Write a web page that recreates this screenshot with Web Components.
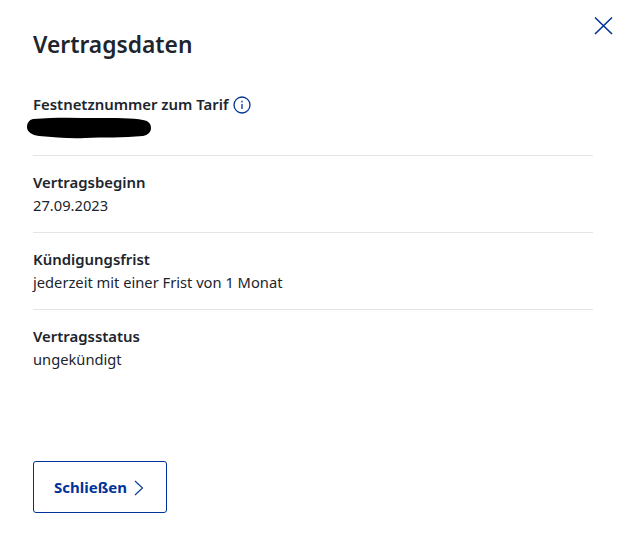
<!DOCTYPE html>
<html lang="de">
<head>
<meta charset="utf-8">
<title>Vertragsdaten</title>
<style>
  html, body { margin: 0; background: #fff; }
  body { font-family: "Noto Sans", "Open Sans", sans-serif; color: #20252d; }
</style>
</head>
<body>
<contract-dialog heading="Vertragsdaten">
  <data-row>
    <span slot="label">Festnetznummer zum Tarif</span>
    <info-icon slot="label"></info-icon>
    <svg slot="value" width="126" height="23" viewBox="0 0 126 23" style="display:block;margin-left:-6px">
      <path d="M6 3C30 1 50 2 70 2c18 0 36 0 46 2 6 1 8 4 8 8 0 4-3 7-8 8-20 2-40 1-58 2-16 1-30-1-46-2C5 19 0 16 0 11 0 7 2 4 6 3z" fill="#000"/>
    </svg>
  </data-row>
  <data-row>
    <span slot="label">Vertragsbeginn</span>
    <span slot="value">27.09.2023</span>
  </data-row>
  <data-row>
    <span slot="label">Kündigungsfrist</span>
    <span slot="value">jederzeit mit einer Frist von 1 Monat</span>
  </data-row>
  <data-row last>
    <span slot="label">Vertragsstatus</span>
    <span slot="value">ungekündigt</span>
  </data-row>
  <link-button slot="actions">Schließen</link-button>
</contract-dialog>

<script>
const dialogTemplate = document.createElement('template');
dialogTemplate.innerHTML = `
<style>
  :host { display: block; position: relative; width: 628px; height: 537px; box-sizing: border-box; padding: 29px 35px 0 33px; }
  h2 { margin: 0 0 32px; font-size: 22.8px; line-height: 32px; font-weight: 600; }
  .actions { margin-top: 91px; }
  #close { position: absolute; top: 15px; right: 15px; width: 20px; height: 20px; display: block; }
</style>
<svg id="close" viewBox="0 0 20 20" fill="none" stroke="#003399" stroke-width="1.6"><path d="M2 2.500L19 19M19 2.500L2 19"/></svg>
<h2></h2>
<slot></slot>
<div class="actions"><slot name="actions"></slot></div>
`;
customElements.define('contract-dialog', class extends HTMLElement {
  constructor() {
    super();
    this.attachShadow({mode: 'open'});
    this.shadowRoot.appendChild(dialogTemplate.content.cloneNode(true));
    this.shadowRoot.querySelector('h2').textContent = this.getAttribute('heading');
  }
});

const rowTemplate = document.createElement('template');
rowTemplate.innerHTML = `
<style>
  :host { display: block; padding-bottom: 16px; margin-bottom: 15px; border-bottom: 1px solid #e3e4e6; font-size: 14.7px; line-height: 22px; }
  :host([last]) { border-bottom: 0; padding-bottom: 0; margin-bottom: 0; }
  .label { display: flex; align-items: center; gap: 5px; font-weight: 600; font-size: 14.92px; line-height: 23px; }
  .value { display: block; }
</style>
<div class="label"><slot name="label"></slot></div>
<div class="value"><slot name="value"></slot></div>
`;
customElements.define('data-row', class extends HTMLElement {
  constructor() {
    super();
    this.attachShadow({mode: 'open'});
    this.shadowRoot.appendChild(rowTemplate.content.cloneNode(true));
  }
});

customElements.define('info-icon', class extends HTMLElement {
  constructor() {
    super();
    this.attachShadow({mode: 'open'}).innerHTML = `
<style>:host { display: inline-flex; } svg { display: block; }</style>
<svg width="18" height="18" viewBox="0 0 18 18" fill="none" stroke="#003399" stroke-width="1.3">
  <circle cx="9" cy="9" r="8"/><path d="M9 8v5"/><path d="M9 4.800v1.600"/>
</svg>`;
  }
});

customElements.define('link-button', class extends HTMLElement {
  constructor() {
    super();
    this.attachShadow({mode: 'open'}).innerHTML = `
<style>
  :host { display: inline-flex; align-items: center; gap: 6px; box-sizing: border-box; width: 134px; height: 52px; padding: 0 0 0 20px; border: 1px solid #003399; border-radius: 3px; color: #003399; font-size: 15px; font-weight: 700; }
  svg { display: block; }
</style>
<slot></slot>
<svg width="12" height="16" viewBox="0 0 12 16" fill="none" stroke="#003399" stroke-width="1.1" style="margin-top:1px"><path d="M2 1L9.500 8 2 15"/></svg>`;
  }
});
</script>
</body>
</html>
